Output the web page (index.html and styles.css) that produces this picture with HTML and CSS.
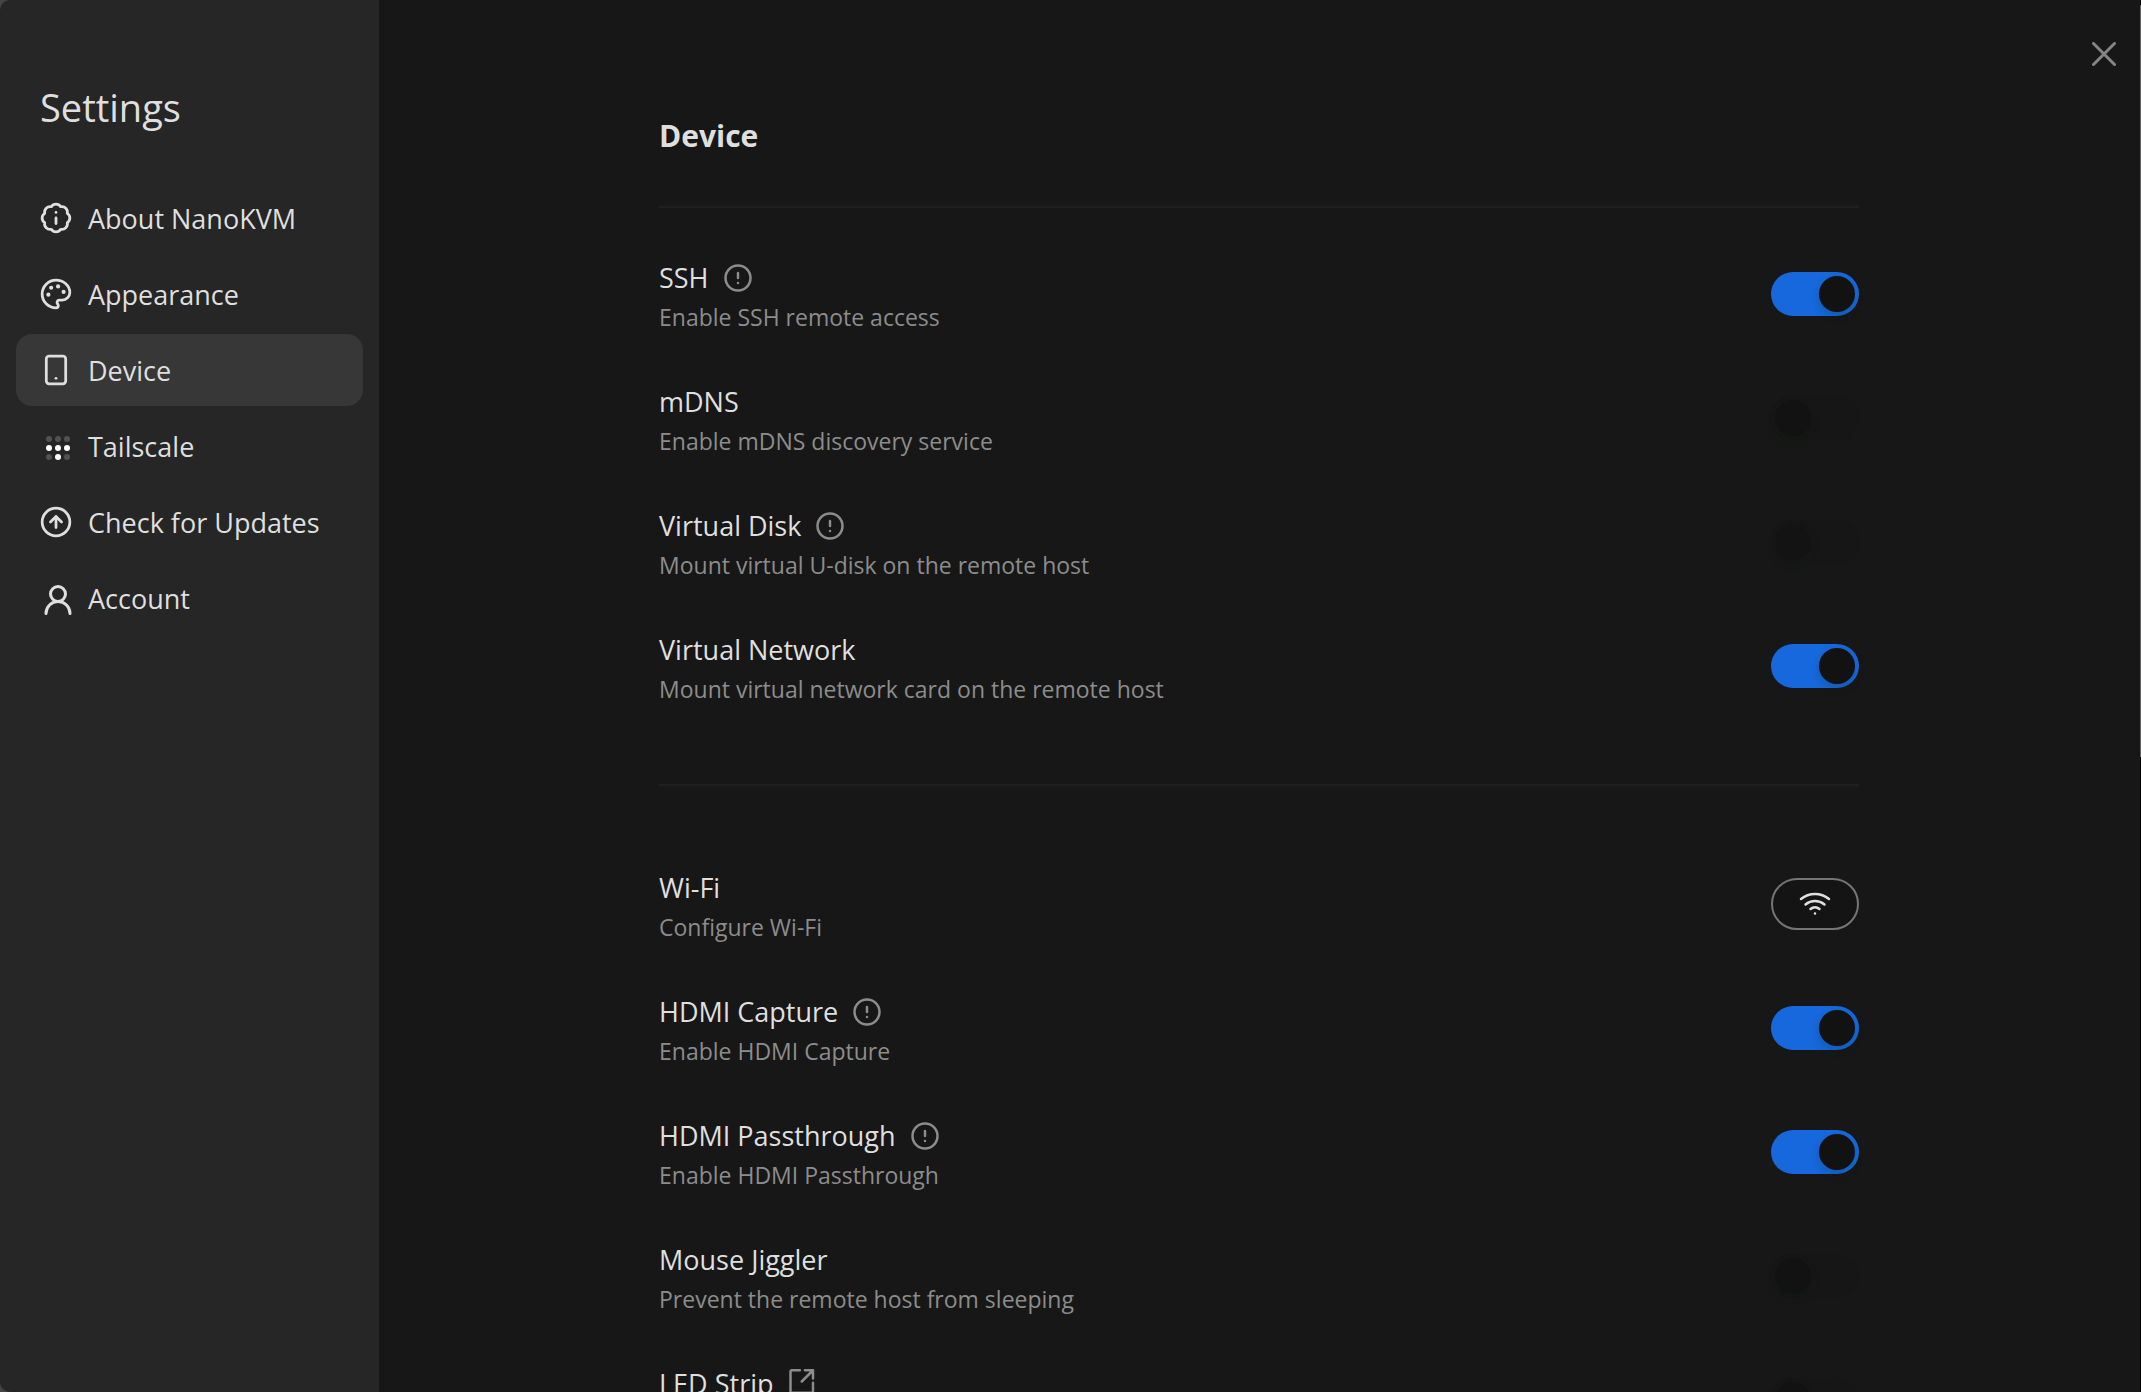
FILE: index.html
```html
<!DOCTYPE html>
<html lang="en">
<head>
    <meta charset="UTF-8">
    <meta name="viewport" content="width=device-width, initial-scale=1.0">
    <title>NanoKVM - Settings</title>
    <link rel="stylesheet" href="styles.css">
</head>
<body>
    <div class="settings">
        <aside class="sidebar">
            <h1>Settings</h1>

            <nav class="menu">
                <a class="menu-item" href="#about">
                    <svg class="icon" viewBox="-1 -1 26 26"><path d="M3.85 8.62a4 4 0 0 1 4.78-4.77 4 4 0 0 1 6.74 0 4 4 0 0 1 4.78 4.78 4 4 0 0 1 0 6.74 4 4 0 0 1-4.77 4.78 4 4 0 0 1-6.75 0 4 4 0 0 1-4.78-4.77 4 4 0 0 1 0-6.76Z"/><path d="M12 16v-4M12 8h.01"/></svg>
                    <span>About NanoKVM</span>
                </a>
                <a class="menu-item" href="#appearance">
                    <svg class="icon" viewBox="-1 -1 26 26"><g class="dots"><circle cx="13.5" cy="6.5" r="1.5"/><circle cx="17.5" cy="10.5" r="1.5"/><circle cx="8.5" cy="7.5" r="1.5"/><circle cx="6.5" cy="12.5" r="1.5"/></g><path d="M12 2C6.5 2 2 6.5 2 12s4.5 10 10 10c.926 0 1.648-.746 1.648-1.688 0-.437-.18-.835-.437-1.125-.29-.289-.438-.652-.438-1.125a1.64 1.64 0 0 1 1.668-1.668h1.996c3.051 0 5.555-2.503 5.555-5.554C21.965 6.012 17.461 2 12 2z"/></svg>
                    <span>Appearance</span>
                </a>
                <a class="menu-item active" href="#device">
                    <svg class="icon" viewBox="-1 -1 26 26"><rect x="5" y="2" width="14" height="20" rx="2"/><path d="M12 18h.01"/></svg>
                    <span>Device</span>
                </a>
                <a class="menu-item" href="#tailscale">
                    <svg class="icon tailscale" viewBox="0 0 36 36"><g class="dim"><circle cx="11" cy="11" r="3"/><circle cx="20" cy="11" r="3"/><circle cx="29" cy="11" r="3"/><circle cx="11" cy="29" r="3"/><circle cx="29" cy="29" r="3"/></g><circle cx="11" cy="20" r="3"/><circle cx="20" cy="20" r="3"/><circle cx="29" cy="20" r="3"/><circle cx="20" cy="29" r="3"/></svg>
                    <span>Tailscale</span>
                </a>
                <a class="menu-item" href="#update">
                    <svg class="icon" viewBox="-1 -1 26 26"><circle cx="12" cy="12" r="10"/><path d="m16 12-4-4-4 4M12 16V8"/></svg>
                    <span>Check for Updates</span>
                </a>
                <a class="menu-item" href="#account">
                    <svg class="icon" viewBox="0 0 36 36"><g class="user"><circle cx="20" cy="14" r="7.5"/><path d="M8 33.500a12 12 0 0 1 24 0"/></g></svg>
                    <span>Account</span>
                </a>
            </nav>
        </aside>

        <main class="content">
            <button class="close" aria-label="Close">
                <svg viewBox="0 0 24 24"><path d="M1.500 1.500l21 21M22.500 1.500l-21 21"/></svg>
            </button>

            <div class="panel">
                <h2>Device</h2>

                <section class="group">
                    <div class="row">
                        <div class="row-text">
                            <div class="row-title">
                                <label for="ssh">SSH</label>
                                <svg class="hint" viewBox="0 0 24 24"><circle cx="12" cy="12" r="10"/><path d="M12 8v4M12 16h.01"/></svg>
                            </div>
                            <p>Enable SSH remote access</p>
                        </div>
                        <input type="checkbox" class="switch" id="ssh" role="switch" checked>
                    </div>
                    <div class="row">
                        <div class="row-text">
                            <div class="row-title"><label for="mdns">mDNS</label></div>
                            <p>Enable mDNS discovery service</p>
                        </div>
                        <input type="checkbox" class="switch" id="mdns" role="switch">
                    </div>
                    <div class="row">
                        <div class="row-text">
                            <div class="row-title">
                                <label for="disk">Virtual Disk</label>
                                <svg class="hint" viewBox="0 0 24 24"><circle cx="12" cy="12" r="10"/><path d="M12 8v4M12 16h.01"/></svg>
                            </div>
                            <p>Mount virtual U-disk on the remote host</p>
                        </div>
                        <input type="checkbox" class="switch" id="disk" role="switch" disabled>
                    </div>
                    <div class="row">
                        <div class="row-text">
                            <div class="row-title"><label for="network">Virtual Network</label></div>
                            <p>Mount virtual network card on the remote host</p>
                        </div>
                        <input type="checkbox" class="switch" id="network" role="switch" checked>
                    </div>
                </section>

                <section class="group">
                    <div class="row">
                        <div class="row-text">
                            <div class="row-title"><label for="wifi">Wi-Fi</label></div>
                            <p>Configure Wi-Fi</p>
                        </div>
                        <button class="wifi-btn" id="wifi">
                            <svg viewBox="0 0 32 24"><path d="M2 7a22 22 0 0 1 28 0M6.500 12.500a15 15 0 0 1 19 0M11.500 17a7 7 0 0 1 9 0M16 21.500h.01"/></svg>
                        </button>
                    </div>
                    <div class="row">
                        <div class="row-text">
                            <div class="row-title">
                                <label for="capture">HDMI Capture</label>
                                <svg class="hint" viewBox="0 0 24 24"><circle cx="12" cy="12" r="10"/><path d="M12 8v4M12 16h.01"/></svg>
                            </div>
                            <p>Enable HDMI Capture</p>
                        </div>
                        <input type="checkbox" class="switch" id="capture" role="switch" checked>
                    </div>
                    <div class="row">
                        <div class="row-text">
                            <div class="row-title">
                                <label for="passthrough">HDMI Passthrough</label>
                                <svg class="hint" viewBox="0 0 24 24"><circle cx="12" cy="12" r="10"/><path d="M12 8v4M12 16h.01"/></svg>
                            </div>
                            <p>Enable HDMI Passthrough</p>
                        </div>
                        <input type="checkbox" class="switch" id="passthrough" role="switch" checked>
                    </div>
                    <div class="row">
                        <div class="row-text">
                            <div class="row-title"><label for="jiggler">Mouse Jiggler</label></div>
                            <p>Prevent the remote host from sleeping</p>
                        </div>
                        <input type="checkbox" class="switch" id="jiggler" role="switch">
                    </div>
                    <div class="row">
                        <div class="row-text">
                            <div class="row-title">
                                <label for="led">LED Strip</label>
                                <svg class="hint" viewBox="0 0 24 24"><path d="M9.500 1H3a1 1 0 0 0-1 1v16a1 1 0 0 0 1 1h16a1 1 0 0 0 1-1v-7M13.500 1H20v6.500M20 1l-9 9"/></svg>
                            </div>
                        </div>
                        <input type="checkbox" class="switch" id="led" role="switch">
                    </div>
                </section>
            </div>
        </main>
    </div>
</body>
</html>
```
FILE: styles.css
```css
* {
    box-sizing: border-box;
}
body {
    margin: 0;
    background: #444;
    color: #dfdfdf;
    font-family: "Segoe UI", "Open Sans", "Noto Sans", sans-serif;
    font-size: 27px;
}
h1, h2, p {
    margin: 0;
}
svg {
    fill: none;
    stroke: currentColor;
    stroke-width: 2;
    stroke-linecap: round;
    stroke-linejoin: round;
}
.settings {
    position: relative;
    display: flex;
    height: 100vh;
    overflow: hidden;
    border-radius: 10px 0 0 10px;
}
/* scrollbar thumb */
.settings::after {
    content: "";
    position: absolute;
    top: 5px;
    right: 0;
    width: 1px;
    height: 54%;
    background: #666;
}

/* sidebar */
.sidebar {
    flex: 0 0 379px;
    padding: 83px 16px 0;
    background: #262626;
}
.sidebar h1 {
    padding-left: 24px;
    font-size: 38px;
    font-weight: 400;
    line-height: 48px;
}
.menu {
    display: flex;
    flex-direction: column;
    gap: 4px;
    margin-top: 51px;
}
.menu-item {
    display: flex;
    align-items: center;
    gap: 14px;
    height: 72px;
    padding: 0 22px;
    border-radius: 16px;
    color: inherit;
    text-decoration: none;
}
.menu-item.active {
    background: #373737;
}
.icon {
    width: 36px;
    height: 36px;
}
.icon .dots {
    fill: currentColor;
    stroke: none;
}
.tailscale {
    fill: #fff;
    stroke: none;
}
.tailscale .dim {
    opacity: 0.2;
}
.icon .user {
    stroke-width: 3;
}

/* content */
.content {
    position: relative;
    flex: 1;
    padding-right: 1px;
    background: #171717;
    border-right: 1px solid #000;
    overflow: hidden;
}
.close {
    position: absolute;
    top: 42px;
    right: 24px;
    width: 24px;
    height: 24px;
    padding: 0;
    border: none;
    background: none;
    color: #858585;
    cursor: pointer;
}
.close svg {
    display: block;
    stroke-width: 3;
}
.panel {
    max-width: 1200px;
    margin: 0 auto;
    padding-top: 112px;
}
.panel h2 {
    font-size: 30px;
    font-weight: 700;
    line-height: 48px;
    margin-bottom: 46px;
}
.group {
    display: flex;
    flex-direction: column;
    gap: 48px;
    padding: 48px 0 80px;
    border-top: 2px solid #1f1f1f;
}
.group + .group {
    padding-top: 80px;
}
.row {
    display: flex;
    align-items: center;
    justify-content: space-between;
    height: 76px;
}
.row-text {
    height: 78px;
}
.row-title {
    display: flex;
    align-items: center;
    gap: 14px;
    height: 46px;
    line-height: 48px;
}
.row-text p {
    font-size: 23px;
    line-height: 32px;
    color: #8c8c8c;
}
.hint {
    width: 30px;
    height: 30px;
    color: #8c8c8c;
}
.switch {
    appearance: none;
    display: flex;
    width: 88px;
    height: 44px;
    margin: 0;
    padding: 4px;
    border-radius: 22px;
    background: #161616;
    cursor: pointer;
}
.switch::before {
    content: "";
    width: 36px;
    height: 36px;
    border-radius: 50%;
    background: #121212;
    box-shadow: 0 4px 8px rgba(0, 35, 11, 0.2);
}
.switch:checked {
    justify-content: flex-end;
    background: #1668dc;
}
.switch:disabled {
    opacity: 0.65;
}
.wifi-btn {
    display: flex;
    align-items: center;
    justify-content: center;
    width: 88px;
    height: 52px;
    padding: 0;
    border: 2px solid #757575;
    border-radius: 26px;
    background: #141414;
    color: #dfdfdf;
    cursor: pointer;
}
.wifi-btn svg {
    width: 32px;
    height: 24px;
    stroke-width: 2.5;
}
```
